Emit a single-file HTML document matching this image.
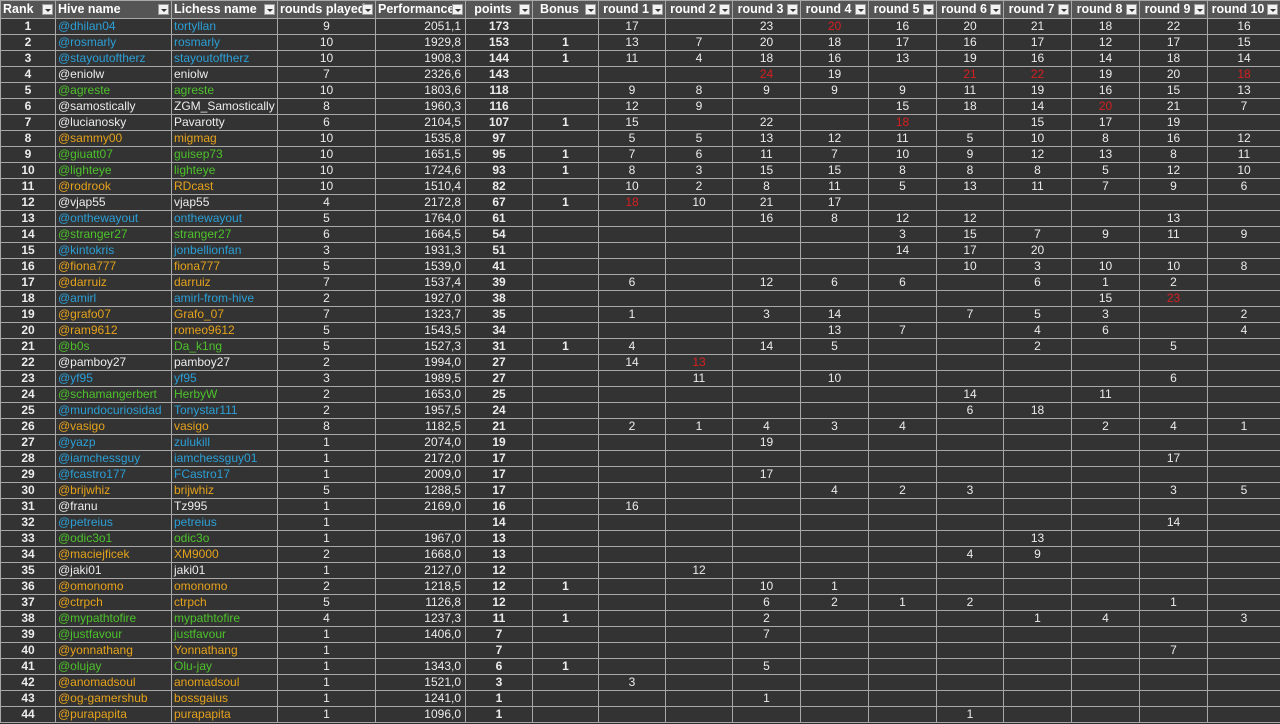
<!DOCTYPE html>
<html><head><meta charset="utf-8">
<style>
html,body{margin:0;padding:0;background:#2f2f2f;width:1280px;height:724px;overflow:hidden}
table{border-collapse:collapse;table-layout:fixed;width:1280px;font-family:"Liberation Sans",Arial,sans-serif;font-size:12px;color:#ececec}
td,th{border:1px solid #a8a8a8;height:15px;padding:0 2px;white-space:nowrap;overflow:hidden;line-height:15px;background:#333}
th{background:#555;color:#fff;font-weight:bold;height:17px;text-align:left;position:relative;padding-right:14px;font-size:12.5px}
th.c{text-align:center}
th i{position:absolute;right:2px;top:3px;width:11px;height:11px;background:#f2f2f2;border:1px solid #999;box-sizing:border-box}
th i:after{content:"";position:absolute;left:2px;top:4px;border-left:3px solid transparent;border-right:3px solid transparent;border-top:3px solid #333}
td.n{text-align:center}
td.p{text-align:right;padding-right:4px}
td.b{font-weight:bold}
.bl{color:#2b9fd6}.gr{color:#4cc22a}.or{color:#e5a21b}.wh{color:#ececec}.rd{color:#d42020}
</style></head><body>
<table id="t">
<colgroup>
<col style="width:55px"><col style="width:116px"><col style="width:106px"><col style="width:98px"><col style="width:90px"><col style="width:67px"><col style="width:66px">
<col style="width:67px"><col style="width:67px"><col style="width:68px"><col style="width:68px"><col style="width:68px"><col style="width:67px"><col style="width:68px"><col style="width:68px"><col style="width:68px"><col style="width:73px">
</colgroup>
<thead><tr>
<th>Rank<i></i></th><th>Hive name<i></i></th><th>Lichess name<i></i></th><th>rounds played<i></i></th><th>Performance<i></i></th><th class="c">points<i></i></th><th class="c">Bonus<i></i></th>
<th class="c">round 1<i></i></th><th class="c">round 2<i></i></th><th class="c">round 3<i></i></th><th class="c">round 4<i></i></th><th class="c">round 5<i></i></th><th class="c">round 6<i></i></th><th class="c">round 7<i></i></th><th class="c">round 8<i></i></th><th class="c">round 9<i></i></th><th class="c">round 10<i></i></th>
</tr></thead>
<tbody id="b"></tbody></table>
<script>
var d=[
["bl","@dhilan04","tortyllan",9,"2051,1",173,"","17,,23,20*,16,20,21,18,22,16"],
["bl","@rosmarly","rosmarly",10,"1929,8",153,1,"13,7,20,18,17,16,17,12,17,15"],
["bl","@stayoutoftherz","stayoutoftherz",10,"1908,3",144,1,"11,4,18,16,13,19,16,14,18,14"],
["wh","@eniolw","eniolw",7,"2326,6",143,"",",,24*,19,,21*,22*,19,20,18*"],
["gr","@agreste","agreste",10,"1803,6",118,"","9,8,9,9,9,11,19,16,15,13"],
["wh","@samostically","ZGM_Samostically",8,"1960,3",116,"","12,9,,,15,18,14,20*,21,7"],
["wh","@lucianosky","Pavarotty",6,"2104,5",107,1,"15,,22,,18*,,15,17,19,"],
["or","@sammy00","migmag",10,"1535,8",97,"","5,5,13,12,11,5,10,8,16,12"],
["gr","@giuatt07","guisep73",10,"1651,5",95,1,"7,6,11,7,10,9,12,13,8,11"],
["gr","@lighteye","lighteye",10,"1724,6",93,1,"8,3,15,15,8,8,8,5,12,10"],
["or","@rodrook","RDcast",10,"1510,4",82,"","10,2,8,11,5,13,11,7,9,6"],
["wh","@vjap55","vjap55",4,"2172,8",67,1,"18*,10,21,17,,,,,,"],
["bl","@onthewayout","onthewayout",5,"1764,0",61,"",",,16,8,12,12,,,13,"],
["gr","@stranger27","stranger27",6,"1664,5",54,"",",,,,3,15,7,9,11,9"],
["bl","@kintokris","jonbellionfan",3,"1931,3",51,"",",,,,14,17,20,,,"],
["or","@fiona777","fiona777",5,"1539,0",41,"",",,,,,10,3,10,10,8"],
["or","@darruiz","darruiz",7,"1537,4",39,"","6,,12,6,6,,6,1,2,"],
["bl","@amirl","amirl-from-hive",2,"1927,0",38,"",",,,,,,,15,23*,"],
["or","@grafo07","Grafo_07",7,"1323,7",35,"","1,,3,14,,7,5,3,,2"],
["or","@ram9612","romeo9612",5,"1543,5",34,"",",,,13,7,,4,6,,4"],
["gr","@b0s","Da_k1ng",5,"1527,3",31,1,"4,,14,5,,,2,,5,"],
["wh","@pamboy27","pamboy27",2,"1994,0",27,"","14,13*,,,,,,,,"],
["bl","@yf95","yf95",3,"1989,5",27,"",",11,,10,,,,,6,"],
["gr","@schamangerbert","HerbyW",2,"1653,0",25,"",",,,,,14,,11,,"],
["bl","@mundocuriosidad","Tonystar111",2,"1957,5",24,"",",,,,,6,18,,,"],
["or","@vasigo","vasigo",8,"1182,5",21,"","2,1,4,3,4,,,2,4,1"],
["bl","@yazp","zulukill",1,"2074,0",19,"",",,19,,,,,,,"],
["bl","@iamchessguy","iamchessguy01",1,"2172,0",17,"",",,,,,,,,17,"],
["bl","@fcastro177","FCastro17",1,"2009,0",17,"",",,17,,,,,,,"],
["or","@brijwhiz","brijwhiz",5,"1288,5",17,"",",,,4,2,3,,,3,5"],
["wh","@franu","Tz995",1,"2169,0",16,"","16,,,,,,,,,"],
["bl","@petreius","petreius",1,"",14,"",",,,,,,,,14,"],
["gr","@odic3o1","odic3o",1,"1967,0",13,"",",,,,,,13,,,"],
["or","@maciejficek","XM9000",2,"1668,0",13,"",",,,,,4,9,,,"],
["wh","@jaki01","jaki01",1,"2127,0",12,"",",12,,,,,,,,"],
["or","@omonomo","omonomo",2,"1218,5",12,1,",,10,1,,,,,,"],
["or","@ctrpch","ctrpch",5,"1126,8",12,"",",,6,2,1,2,,,1,"],
["gr","@mypathtofire","mypathtofire",4,"1237,3",11,1,",,2,,,,1,4,,3"],
["gr","@justfavour","justfavour",1,"1406,0",7,"",",,7,,,,,,,"],
["or","@yonnathang","Yonnathang",1,"",7,"",",,,,,,,,7,"],
["gr","@olujay","Olu-jay",1,"1343,0",6,1,",,5,,,,,,,"],
["or","@anomadsoul","anomadsoul",1,"1521,0",3,"","3,,,,,,,,,"],
["or","@og-gamershub","bossgaius",1,"1241,0",1,"",",,1,,,,,,,"],
["or","@purapapita","purapapita",1,"1096,0",1,"",",,,,,1,,,,"]];
var h="";
d.forEach(function(r,i){
h+='<tr><td class="n b">'+(i+1)+'</td><td class="'+r[0]+'">'+r[1]+'</td><td class="'+r[0]+'">'+r[2]+'</td><td class="n">'+r[3]+'</td><td class="p">'+r[4]+'</td><td class="n b">'+r[5]+'</td><td class="n b">'+r[6]+'</td>';
r[7].split(",").forEach(function(v){var red=v.indexOf("*")>=0;v=v.replace("*","");h+='<td class="n'+(red?' rd':'')+'">'+v+'</td>';});
h+='</tr>';});
document.getElementById("b").innerHTML=h;
</script>
</body></html>
